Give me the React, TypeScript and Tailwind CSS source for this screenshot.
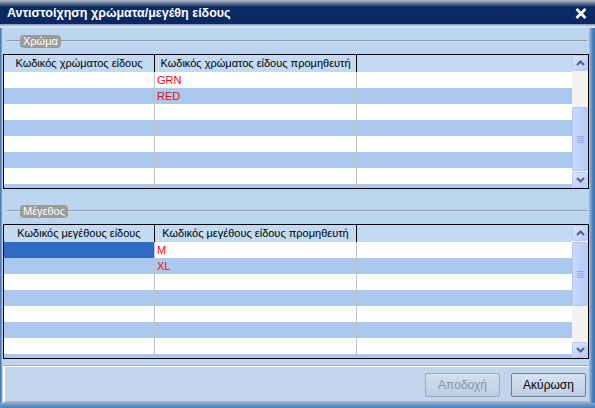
import React from "react";

const FONT = { fontFamily: '"Liberation Sans", "DejaVu Sans", sans-serif' };

function ArrowBtn({ dir }: { dir: "up" | "down" }) {
  return (
    <div className="h-[16px] w-[16px] rounded-[2px] border border-[#b9cbf3] bg-gradient-to-br from-[#dbe5fd] to-[#b7c9f6] flex items-center justify-center">
      <svg width="9" height="6" viewBox="0 0 9 6">
        {dir === "up" ? (
          <path d="M1 5 L4.5 1.5 L8 5" stroke="#4d6185" strokeWidth="2" fill="none" />
        ) : (
          <path d="M1 1 L4.5 4.5 L8 1" stroke="#4d6185" strokeWidth="2" fill="none" />
        )}
      </svg>
    </div>
  );
}

function Thumb() {
  return (
    <div className="h-[64px] w-[16px] rounded-[2px] border border-[#b3c6f2] bg-gradient-to-r from-[#c9d8fd] to-[#b6c9f8] flex flex-col items-center justify-center gap-[1px]">
      <div className="h-[1px] w-[7px] bg-[#8cacf0]" />
      <div className="h-[1px] w-[7px] bg-[#8cacf0]" />
      <div className="h-[1px] w-[7px] bg-[#8cacf0]" />
      <div className="h-[1px] w-[7px] bg-[#8cacf0]" />
    </div>
  );
}

function GroupHeader({ label, className = "" }: { label: string; className?: string }) {
  return (
    <div className={`h-[26px] flex items-center pl-[4px] pr-[2px] ${className}`}>
      <div className="h-[2px] w-[13px] border-t border-[#8d97a3] border-b border-b-[#d3e1f1]" />
      <div className="h-[13px] px-[3px] rounded-[4px] bg-[#9b9b9b] text-white text-[11px] leading-[13px]">
        {label}
      </div>
      <div className="h-[2px] flex-1 border-t border-[#8d97a3] border-b border-b-[#d3e1f1]" />
    </div>
  );
}

function Grid({
  h1,
  h2,
  vals,
  selectFirst,
  thumbTop,
}: {
  h1: string;
  h2: string;
  vals: string[];
  selectFirst?: boolean;
  thumbTop: boolean;
}) {
  const rows = [0, 1, 2, 3, 4, 5, 6, 7];
  return (
    <div className="h-[135px] border border-black flex flex-row bg-white">
      <div className="flex-1 flex flex-col overflow-hidden">
        <div className="h-[17px] shrink-0 flex bg-[#c3daf3] text-[11px] leading-[17px] text-black">
          <div className="w-[151px] border-r border-black text-center whitespace-nowrap overflow-hidden">{h1}</div>
          <div className="w-[202px] border-r border-black text-center whitespace-nowrap overflow-hidden">{h2}</div>
          <div className="flex-1" />
        </div>
        {rows.map((i) => (
          <div
            key={i}
            className={`h-[16px] shrink-0 flex text-[11px] leading-[16px] ${i % 2 === 0 ? "bg-white" : "bg-[#aac9ee]"}`}
          >
            <div
              className={`w-[151px] border-r border-[#c0c0c0] ${selectFirst && i === 0 ? "bg-[#316ac5]" : ""}`}
            />
            <div className="w-[202px] border-r border-[#c0c0c0] pl-[2px] text-[#ff0000]">{vals[i] ?? ""}</div>
            <div className="flex-1" />
          </div>
        ))}
      </div>
      <div className="w-[16px] flex flex-col bg-[#f3f2ec]">
        <ArrowBtn dir="up" />
        {thumbTop ? (
          <>
            <div className="h-[1px]" />
            <Thumb />
            <div className="flex-1" />
          </>
        ) : (
          <>
            <div className="flex-1" />
            <Thumb />
            <div className="h-[1px]" />
          </>
        )}
        <ArrowBtn dir="down" />
      </div>
    </div>
  );
}

export default function App() {
  return (
    <div className="w-[595px] h-[408px] flex flex-col bg-[#bcd6ef] overflow-hidden" style={FONT}>
      <div className="h-[24px] shrink-0 flex items-center justify-between bg-[linear-gradient(to_bottom,#b4bccb_0px,#6e7f9e_3px,#0d2b63_7px,#0b2860_24px)] pl-[7px] pr-[8px]">
        <span className="text-white font-bold text-[12.5px] leading-[16px] mt-[2px]">
          Αντιστοίχηση χρώματα/μεγέθη είδους
        </span>
        <svg width="12" height="11" viewBox="0 0 12 11" className="mt-[3px]">
          <path d="M1.5 1 L10.5 10 M10.5 1 L1.5 10" stroke="white" strokeWidth="2.6" />
        </svg>
      </div>
      <div className="h-[4px] shrink-0 bg-[linear-gradient(to_bottom,#7c92b3,#c4d3e6,#e6eef7)]" />
      <div className="flex-1 flex flex-row">
        <div className="w-[3px] bg-[linear-gradient(to_right,#3f6fa9,#6f9bd0,#e8f0fa)]" />
        <div className="flex-1 flex flex-col">
          <GroupHeader label="Χρώμα" />
          <Grid
            h1="Κωδικός χρώματος είδους"
            h2="Κωδικός χρώματος είδους προμηθευτή"
            vals={["GRN", "RED"]}
            thumbTop={false}
          />
          <GroupHeader label="Μέγεθος" className="mt-[9px]" />
          <Grid
            h1="Κωδικός μεγέθους είδους"
            h2="Κωδικός μεγέθους είδους προμηθευτή"
            vals={["M", "XL"]}
            selectFirst
            thumbTop
          />
          <div className="h-[6px]" />
          <div className="h-[1px] bg-[#a6aeb8]" />
          <div className="flex-1 bg-[#c2d5ec] border-l-[2px] border-t border-white border-b-[2px] border-b-[#a9b2bc] flex justify-end items-start pt-[6px] pr-[3px] gap-[11px]">
            <button className="w-[75px] h-[24px] border border-[#9aa9bb] rounded-[2px] bg-[linear-gradient(to_bottom,#d4e0ef,#bccde4)] text-[#8594aa] text-[12px]">
              Αποδοχή
            </button>
            <button className="w-[75px] h-[24px] border border-[#6f7e92] rounded-[2px] bg-[linear-gradient(to_bottom,#d8e3f2,#bccde4)] text-black text-[12px]">
              Ακύρωση
            </button>
          </div>
        </div>
        <div className="w-[6px] bg-[linear-gradient(to_right,#9ec0e6,#5c8cc4,#3a6aa6)]" />
      </div>
      <div className="h-[5px] shrink-0 bg-[linear-gradient(to_bottom,#7aa6d6,#4a7cb6)]" />
    </div>
  );
}
